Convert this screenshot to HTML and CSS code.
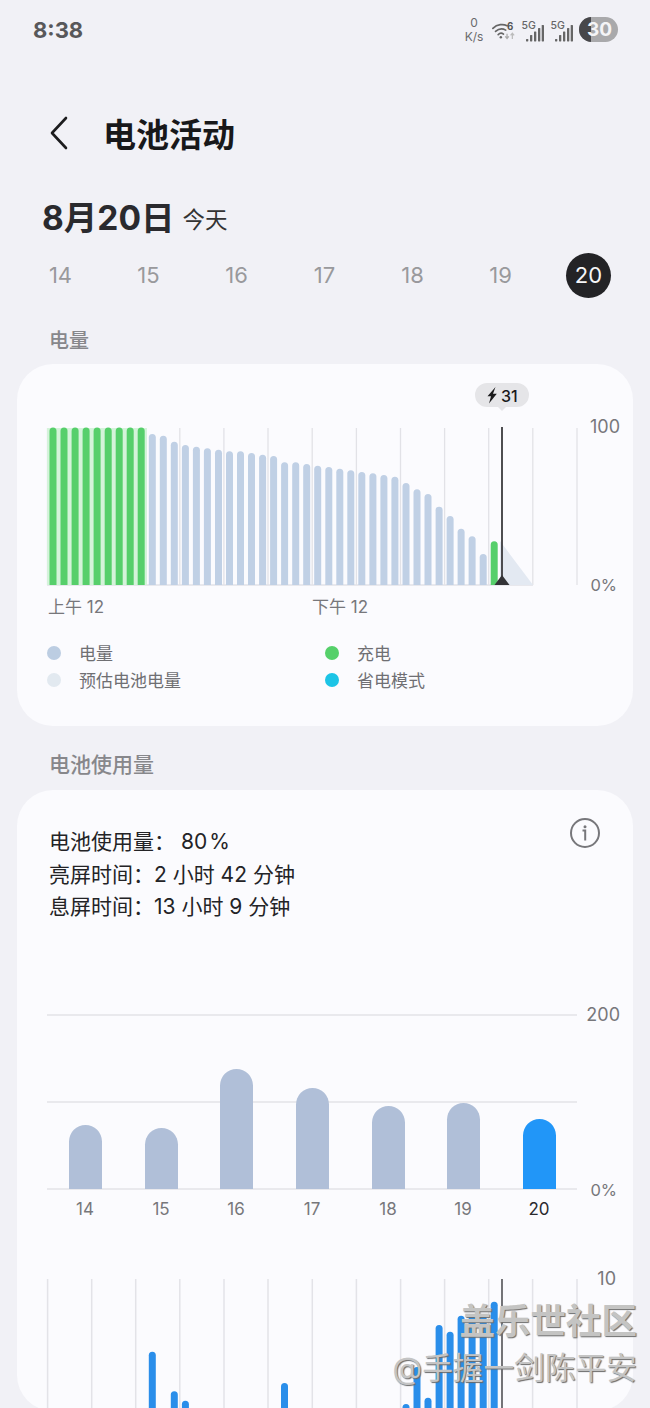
FILE: index.html
```html
<!DOCTYPE html>
<html lang="zh-CN">
<head>
<meta charset="utf-8">
<title>电池活动</title>
<link rel="stylesheet" href="styles.css">
</head>
<body>
<div class="page">
  <div class="status">
    <span class="time">8:38</span>
    <div class="status-icons">
      <div class="speed"><span>0</span><span>K/s</span></div>
      <svg class="wifi" viewBox="0 0 26 22" width="23" height="20">
        <g fill="none" stroke="#666" stroke-width="1.9" stroke-linecap="round">
          <path d="M1 8C6 3 13 3 17 5"/>
          <path d="M4 11.5C8 8 12 8 15.5 10"/>
          <path d="M7 15C9 13 11 13 13 14.5"/>
        </g>
        <circle cx="10" cy="18" r="1.4" fill="#666"/>
        <text class="wifi-six" x="17" y="9.500">6</text>
        <path d="M17 14v5m-2-2l2 2.4l2-2.4" fill="none" stroke="#aaa" stroke-width="1.4"/>
        <path d="M23 20v-6m-2 2l2-2.4l2 2.4" fill="none" stroke="#bbb" stroke-width="1.4"/>
      </svg>
      <svg class="signal" viewBox="0 0 24 22" width="24" height="22">
        <text class="sig-text" x="1.500" y="8.500">5G</text>
        <g fill="#666">
          <rect x="6" y="19" width="2.300" height="2.400" rx=".6"/>
          <rect x="10" y="15" width="2.300" height="6.400" rx=".6"/>
          <rect x="14" y="11.500" width="2.300" height="9.900" rx=".6"/>
          <rect x="18" y="8" width="2.300" height="13.400" rx=".6"/>
          <rect x="21.700" y="5" width="2.300" height="16.400" rx=".6"/>
        </g>
      </svg>
      <svg class="signal" viewBox="0 0 24 22" width="24" height="22">
        <text class="sig-text" x="1.500" y="8.500">5G</text>
        <g fill="#666">
          <rect x="6" y="19" width="2.300" height="2.400" rx=".6"/>
          <rect x="10" y="15" width="2.300" height="6.400" rx=".6"/>
          <rect x="14" y="11.500" width="2.300" height="9.900" rx=".6"/>
          <rect x="18" y="8" width="2.300" height="13.400" rx=".6"/>
          <rect x="21.700" y="5" width="2.300" height="16.400" rx=".6"/>
        </g>
      </svg>
      <div class="battery"><span class="battery-fill"></span><span class="battery-num">30</span></div>
    </div>
  </div>

  <header class="header">
    <svg class="back" viewBox="0 0 20 34" width="20" height="34">
      <path d="M17 2L3 17l14 15" fill="none" stroke="#1c1c1e" stroke-width="2.600" stroke-linecap="round" stroke-linejoin="round"/>
    </svg>
    <h1 class="title">电池活动</h1>
  </header>

  <div class="date-row"><span class="date">8月20日</span><span class="today">今天</span></div>

  <div class="days">
    <span class="day">14</span><span class="day">15</span><span class="day">16</span><span class="day">17</span><span class="day">18</span><span class="day">19</span><span class="day day-on">20</span>
  </div>

  <div class="section section-one">电量</div>
  <section class="card card-one">
    <svg class="chart-one" viewBox="17 380 616 240" width="616" height="240">
      <defs><clipPath id="plot"><rect x="17" y="380" width="616" height="205"/></clipPath></defs>
      <g class="grid">
        <path d="M47.500 428V585M91.600 428V585M135.700 428V585M179.800 428V585M223.900 428V585M268 428V585M312.200 428V585M356.400 428V585M400.500 428V585M444.600 428V585M488.700 428V585M532.800 428V585M577 428V585"/>
        <path d="M47 585H533"/>
      </g>
      <rect class="green-bg" x="47" y="428" width="100" height="157"/>
      <path class="forecast" d="M500 541L533 585H500Z"/>
      <g clip-path="url(#plot)">
        <g class="bar-green">
          <rect x="49.500" y="427.500" width="7" height="165" rx="3.500"/>
          <rect x="60.500" y="427.500" width="7" height="165" rx="3.500"/>
          <rect x="71.600" y="427.500" width="7" height="165" rx="3.500"/>
          <rect x="82.600" y="427.500" width="7" height="165" rx="3.500"/>
          <rect x="93.600" y="427.500" width="7" height="165" rx="3.500"/>
          <rect x="104.700" y="427.500" width="7" height="165" rx="3.500"/>
          <rect x="115.700" y="427.500" width="7" height="165" rx="3.500"/>
          <rect x="126.700" y="427.500" width="7" height="165" rx="3.500"/>
          <rect x="137.700" y="427.500" width="7" height="165" rx="3.500"/>
          <rect x="490.700" y="541.300" width="7" height="50" rx="3.500"/>
        </g>
        <g class="bar-blue">
          <rect x="148.800" y="434" width="7" height="158" rx="3.500"/>
          <rect x="159.800" y="435.700" width="7" height="156" rx="3.500"/>
          <rect x="170.800" y="441.700" width="7" height="150" rx="3.500"/>
          <rect x="181.900" y="445" width="7" height="147" rx="3.500"/>
          <rect x="192.900" y="446.700" width="7" height="145" rx="3.500"/>
          <rect x="203.900" y="448.300" width="7" height="144" rx="3.500"/>
          <rect x="215" y="449.700" width="7" height="142" rx="3.500"/>
          <rect x="226" y="451.300" width="7" height="141" rx="3.500"/>
          <rect x="237" y="451.300" width="7" height="141" rx="3.500"/>
          <rect x="248" y="453" width="7" height="139" rx="3.500"/>
          <rect x="259.100" y="454.700" width="7" height="137" rx="3.500"/>
          <rect x="270.100" y="456" width="7" height="136" rx="3.500"/>
          <rect x="281.100" y="462.300" width="7" height="130" rx="3.500"/>
          <rect x="292.200" y="462.300" width="7" height="130" rx="3.500"/>
          <rect x="303.200" y="464" width="7" height="128" rx="3.500"/>
          <rect x="314.200" y="465.700" width="7" height="126" rx="3.500"/>
          <rect x="325.300" y="467" width="7" height="125" rx="3.500"/>
          <rect x="336.300" y="468.700" width="7" height="123" rx="3.500"/>
          <rect x="347.300" y="470.300" width="7" height="122" rx="3.500"/>
          <rect x="358.300" y="472" width="7" height="120" rx="3.500"/>
          <rect x="369.400" y="473.300" width="7" height="119" rx="3.500"/>
          <rect x="380.400" y="475" width="7" height="117" rx="3.500"/>
          <rect x="391.400" y="476.700" width="7" height="115" rx="3.500"/>
          <rect x="402.500" y="483" width="7" height="109" rx="3.500"/>
          <rect x="413.500" y="489.300" width="7" height="103" rx="3.500"/>
          <rect x="424.500" y="494" width="7" height="98" rx="3.500"/>
          <rect x="435.600" y="506.700" width="7" height="85" rx="3.500"/>
          <rect x="446.600" y="516" width="7" height="76" rx="3.500"/>
          <rect x="457.600" y="528.700" width="7" height="63" rx="3.500"/>
          <rect x="468.600" y="536.300" width="7" height="56" rx="3.500"/>
          <rect x="479.700" y="554" width="7" height="38" rx="3.500"/>
        </g>
      </g>
      <path class="cursor" d="M502 427V585"/>
      <path class="cursor-foot" d="M502 575L509.500 585H494.500Z"/>
      <path class="pill" d="M487 383H517A12 12 0 0 1 517 407H506L502 411L498 407H487A12 12 0 0 1 487 383Z"/>
      <path class="bolt" d="M495.500 387L487.500 396.300H491L489 403.500L496.800 393.800H493Z"/>
      <text class="pill-text" x="501" y="401.500">31</text>
      <text class="axis axis-end" x="620" y="433">100</text>
      <text class="axis axis-end axis-zero" x="617" y="590.500">0%</text>
      <text class="axis" x="48" y="613">上午 12</text>
      <text class="axis" x="312" y="613">下午 12</text>
    </svg>
    <div class="legend">
      <div class="legend-item"><span class="dot dot-level"></span>电量</div>
      <div class="legend-item"><span class="dot dot-charge"></span>充电</div>
      <div class="legend-item"><span class="dot dot-forecast"></span>预估电池电量</div>
      <div class="legend-item"><span class="dot dot-saver"></span>省电模式</div>
    </div>
  </section>

  <div class="section section-two">电池使用量</div>
  <section class="card card-two">
    <div class="usage-head">
      <div class="usage">
        <div>电池使用量：&nbsp;80<span class="pct">%</span></div>
        <div>亮屏时间：2 小时 42 分钟</div>
        <div>息屏时间：13 小时 9 分钟</div>
      </div>
      <svg class="info" viewBox="0 0 30 30" width="30" height="30">
        <circle cx="15" cy="15" r="14" fill="none" stroke="#77777b" stroke-width="2"/>
        <circle cx="15" cy="8.800" r="1.500" fill="#77777b"/>
        <path d="M12.500 12.500H15.200V22.500" fill="none" stroke="#77777b" stroke-width="2"/>
      </svg>
    </div>
    <svg class="chart-two" viewBox="17 1000 616 412" width="616" height="412">
      <path class="hline" d="M47 1015H577M47 1102H577M47 1189H577"/>
      <path class="usage-bar" d="M69 1189V1141.500A16.500 16.500 0 0 1 102 1141.500V1189Z"/>
      <path class="usage-bar" d="M145 1189V1144.500A16.500 16.500 0 0 1 178 1144.500V1189Z"/>
      <path class="usage-bar" d="M220 1189V1085.500A16.500 16.500 0 0 1 253 1085.500V1189Z"/>
      <path class="usage-bar" d="M296 1189V1104.500A16.500 16.500 0 0 1 329 1104.500V1189Z"/>
      <path class="usage-bar" d="M372 1189V1122.500A16.500 16.500 0 0 1 405 1122.500V1189Z"/>
      <path class="usage-bar" d="M447 1189V1119.500A16.500 16.500 0 0 1 480 1119.500V1189Z"/>
      <path class="usage-bar usage-bar-on" d="M523 1189V1135.500A16.500 16.500 0 0 1 556 1135.500V1189Z"/>
      <text class="axis axis-end" x="620" y="1021">200</text>
      <text class="axis axis-end axis-zero" x="617" y="1195.500">0%</text>
      <g class="axis axis-mid">
        <text x="85" y="1215">14</text>
        <text x="161" y="1215">15</text>
        <text x="236" y="1215">16</text>
        <text x="312" y="1215">17</text>
        <text x="388" y="1215">18</text>
        <text x="463" y="1215">19</text>
      </g>
      <text class="axis axis-mid axis-on" x="539" y="1215">20</text>
      <path class="vline" d="M47.600 1279V1412M91.700 1279V1412M135.700 1279V1412M179.800 1279V1412M224 1279V1412M268 1279V1412M312.300 1279V1412M356.400 1279V1412M400.600 1279V1412M444.600 1279V1412M488.700 1279V1412M532.600 1279V1412M577 1279V1412"/>
      <g class="app-bar">
        <rect x="148.800" y="1351.700" width="7" height="70" rx="3.500"/>
        <rect x="170.800" y="1391.300" width="7" height="30" rx="3.500"/>
        <rect x="181.900" y="1400.700" width="7" height="30" rx="3.500"/>
        <rect x="281" y="1383" width="7" height="40" rx="3.500"/>
        <rect x="402.500" y="1404" width="7" height="20" rx="3.500"/>
        <rect x="413.500" y="1367" width="7" height="60" rx="3.500"/>
        <rect x="424.500" y="1397.700" width="7" height="30" rx="3.500"/>
        <rect x="435.600" y="1325" width="7" height="100" rx="3.500"/>
        <rect x="446.600" y="1331.700" width="7" height="90" rx="3.500"/>
        <rect x="457.600" y="1315.700" width="7" height="110" rx="3.500"/>
        <rect x="468.600" y="1315.700" width="7" height="110" rx="3.500"/>
        <rect x="479.700" y="1315.700" width="7" height="110" rx="3.500"/>
        <rect x="490.700" y="1301.700" width="7" height="120" rx="3.500"/>
      </g>
      <path class="cursor-thin" d="M502 1279V1412"/>
      <text class="axis axis-end" x="616" y="1285">10</text>
    </svg>
  </section>

  <div class="watermark">
    <div class="wm-main">盖乐世社区</div>
    <div class="wm-sub">@手握一剑陈平安</div>
  </div>
</div>
</body>
</html>
```
FILE: styles.css
```css
* { box-sizing: border-box; }
html, body { margin: 0; padding: 0; }
body {
  background: #f1f1f6;
  font-family: Inter, "Noto Sans CJK SC", sans-serif;
  color: #1f1f22;
}
.page { position: relative; width: 650px; height: 1408px; overflow: hidden; }

.status { height: 60px; display: flex; justify-content: space-between; align-items: center; padding: 0 32px 0 33px; }
.time { font-size: 22px; font-weight: 700; color: #58585a; }
.status-icons { display: flex; align-items: center; gap: 4px; margin-top: -2px; }
.speed { display: flex; flex-direction: column; align-items: center; width: 26px; font-size: 12px; line-height: 14px; color: #6a6a6c; margin-right: 1px; margin-top: 2px; }
.wifi { margin-top: 4px; }
.wifi-six { font: 700 11px Inter, sans-serif; fill: #555; }
.signal { margin-top: 4px; margin-left: 1px; overflow: visible; }
.sig-text { font: 500 10.500px Inter, sans-serif; fill: #666; }
.battery { position: relative; width: 39px; height: 25px; margin-left: 2px; border-radius: 13px; background: #a9a9ab; overflow: hidden; display: flex; align-items: center; justify-content: center; }
.battery-fill { position: absolute; left: 0; top: 0; bottom: 0; width: 12px; background: #47474a; }
.battery-num { position: relative; margin-left: 2px; font-size: 19px; font-weight: 700; color: #f4f4f6; }

.header { margin-top: 45px; height: 60px; display: flex; align-items: center; padding-left: 49px; }
.back { flex: none; margin-top: -4px; }
.title { margin: 0 0 0 34px; font-size: 33px; line-height: 60px; font-weight: 700; color: #18181a; }

.date-row { margin-top: 25px; height: 50px; display: flex; align-items: center; padding-left: 42px; }
.date { font-size: 33.500px; font-weight: 700; color: #2a2a2e; }
.today { margin-left: 8px; margin-top: 5px; font-size: 22.500px; color: #333; }

.days { margin-top: 13px; height: 45px; display: flex; justify-content: space-between; padding: 0 39px 0 38px; }
.day { width: 45px; height: 45px; font-size: 22px; line-height: 45px; text-align: center; color: #99999c; }
.day-on { border-radius: 50%; background: #232326; color: #f6f6f8; }

.section { height: 30px; padding-left: 49px; font-size: 20px; line-height: 30px; font-weight: 500; color: #87878b; }
.section-one { margin-top: 28px; }
.section-two { margin-top: 24px; font-size: 21px; }

.card { background: #fbfbfe; border-radius: 36px; margin: 0 17px; overflow: hidden; }
.card-one { margin-top: 8px; height: 362px; padding-top: 16px; }
.card-two { margin-top: 10px; height: 621px; }
svg { display: block; }

.grid path { stroke: #e2e2e7; stroke-width: 1.300; fill: none; }
.green-bg { fill: #d4f3da; }
.forecast { fill: #e3e9f2; }
.bar-green rect { fill: #56cf6b; }
.bar-blue rect { fill: #c0d0e5; }
.cursor { stroke: #3a3a3e; stroke-width: 1.800; }
.cursor-foot { fill: #333337; }
.pill { fill: #e5e5e8; }
.bolt { fill: #1a1a1c; }
.pill-text { font: 500 16px Inter, sans-serif; fill: #1a1a1c; }
.axis { font: 400 17px Inter, "Noto Sans CJK SC", sans-serif; fill: #77777b; }
.axis-end { text-anchor: end; font-size: 18px; }
.axis-zero { font-size: 16.500px; }
.axis-mid { text-anchor: middle; }
.axis-on { fill: #2a2a2e; }

.legend { margin-top: 19px; padding-left: 30px; display: grid; grid-template-columns: 278px 1fr; grid-auto-rows: 27px; }
.legend-item { display: flex; align-items: center; gap: 18px; font-size: 17px; color: #6f6f73; }
.dot { flex: none; width: 14px; height: 14px; border-radius: 50%; }
.dot-level { background: #bccde2; }
.dot-charge { background: #55d06a; }
.dot-forecast { background: #e2e9f0; }
.dot-saver { background: #1cc4e6; }

.usage-head { display: flex; justify-content: space-between; align-items: flex-start; padding: 28px 33px 0 32px; }
.usage { margin-top: 8px; font-size: 21px; line-height: 32.500px; color: #232326; }
.pct { margin-left: 2px; }
.chart-two { margin-top: 76px; }
.hline { stroke: #e3e3e7; stroke-width: 1.500; fill: none; }
.vline { stroke: #e3e3e8; stroke-width: 1.500; fill: none; }
.usage-bar { fill: #b0bfd8; }
.usage-bar-on { fill: #2196f8; }
.app-bar rect { fill: #2a8eea; }
.cursor-thin { stroke: #3a3a3e; stroke-width: 1.400; }

.watermark { position: absolute; right: 13px; top: 1298px; text-align: right; pointer-events: none; }
.wm-main { font-size: 35.500px; line-height: 48px; font-weight: 700; color: #c4c4c3; text-shadow: 1px 1px 1px #6c6c6c; }
.wm-sub { margin-top: 4px; font-size: 30.700px; line-height: 36px; color: #c4c4c4; text-shadow: 1px 1px 1px #6a6a6a; }
```
